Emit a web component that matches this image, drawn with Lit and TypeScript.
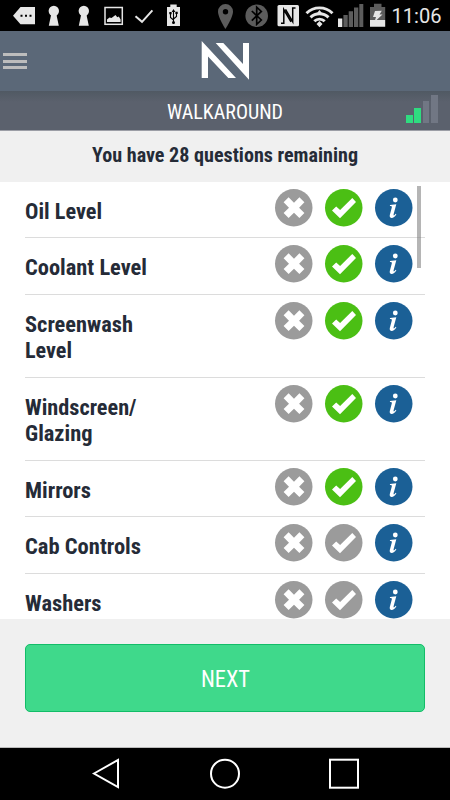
import { LitElement, html, svg, css } from "lit";
import { customElement, property } from "lit/decorators.js";
import { classMap } from "lit/directives/class-map.js";

interface Line {
  text: string;
  width: number;
}
interface Question {
  lines: Line[];
  passed: boolean;
}

const QUESTIONS: Question[] = [
  { lines: [{ text: "Oil Level", width: 77 }], passed: true },
  { lines: [{ text: "Coolant Level", width: 122 }], passed: true },
  { lines: [{ text: "Screenwash", width: 108 }, { text: "Level", width: 47 }], passed: true },
  { lines: [{ text: "Windscreen/", width: 111.5 }, { text: "Glazing", width: 67.5 }], passed: true },
  { lines: [{ text: "Mirrors", width: 66 }], passed: true },
  { lines: [{ text: "Cab Controls", width: 116 }], passed: false },
  { lines: [{ text: "Washers", width: 76.5 }], passed: false },
];

/** One line of condensed text, fitted to a fixed width. */
@customElement("condensed-text")
export class CondensedText extends LitElement {
  @property() text = "";
  @property({ type: Number }) width = 100;
  @property({ type: Number }) height = 26.6;
  @property({ type: Number }) baseline = 19.5;

  static styles = css`
    :host { display: block; }
    svg { display: block; overflow: visible; }
    text { fill: currentColor; font-stretch: 75%; }
  `;

  render() {
    return html`<svg width=${this.width} height=${this.height}>
      <text x="0" y=${this.baseline} textLength=${this.width} lengthAdjust="spacingAndGlyphs">${this.text}</text>
    </svg>`;
  }
}

@customElement("status-bar")
export class StatusBar extends LitElement {
  static styles = css`
    :host { display: block; height: 31px; background: #000; }
    svg { display: block; }
    .lit { fill: #e6e6e6; }
    .dim { fill: #5c5c5c; }
    .stroke { fill: none; stroke: #e6e6e6; }
    .cut { fill: none; stroke: #000; }
    .clock { fill: #e6e6e6; font: 400 20px Roboto, sans-serif; }
  `;

  render() {
    const keyhole = (x: number) => svg`
      <g transform="translate(${x} 0)">
        <circle class="lit" cx="5.5" cy="11" r="5.2"></circle>
        <path class="lit" d="M3.2 13h4.6l2.7 12.7H.5z"></path>
      </g>`;
    return html`<svg width="450" height="31" viewBox="0 0 450 31">
      <path class="lit" d="M13 15.7 20.5 7H35v17.3H20.500z"></path>
      <path d="M20.500 14.700h2v2h-2zM25 14.700h2v2h-2zM29.500 14.700h2v2h-2z"></path>
      ${keyhole(48.3)}${keyhole(78.3)}
      <rect class="stroke" x="105" y="7.500" width="17.300" height="16.800" stroke-width="1.500"></rect>
      <path class="lit" d="M107 22v-2.500l2.500-2 2 .5 4-3 1.800 2.200 1.500-.7 1.800 3V22z"></path>
      <path class="stroke" d="M135.500 16.200 142 21.800l10.400-11.400" stroke-width="2"></path>
      <path class="lit" d="M167 7h3.300V4.500h6.400V7h3.300v19h-13z"></path>
      <path class="cut" d="M173.500 10.500v13M170.500 13v4.500l3 2.500M176.500 12.500v4l-3 2.500" stroke-width="1.100"></path>
      <path d="M173.500 9l1.800 3h-3.600zM169.300 12h2.300v2.300h-2.300zM175.400 11.800h2.300v2.300h-2.300z"></path>
      <circle cx="173.500" cy="22.600" r="1.500"></circle>

      <path class="dim" fill-rule="evenodd" d="M225.500 4a7.500 7.500 0 0 1 7.500 7.500c0 6-7.500 17.500-7.500 17.500S218 17.500 218 11.500A7.500 7.500 0 0 1 225.500 4zm0 5a2.700 2.700 0 1 0 0 5.400 2.700 2.700 0 0 0 0-5.400z"></path>
      <circle class="dim" cx="256.700" cy="15.700" r="11.300"></circle>
      <path class="cut" d="M251.800 11 261.300 20l-4.600 4.300V7.200l4.600 4.200-9.500 9.200" stroke-width="1.700"></path>
      <rect class="lit" x="277.500" y="5" width="21.500" height="21.300" rx="1.500"></rect>
      <path class="cut" d="M281 23.200h2.800V9.500l7.200 12.300M295.500 8h-2.800v13.700L285.500 9.400" stroke-width="1.500"></path>
      <g class="stroke" stroke-width="2.900">
        <path d="M306.500 13.200a18.500 18.500 0 0 1 26 0"></path>
        <path d="M310.500 17.400a12.800 12.800 0 0 1 18 0"></path>
        <path d="M314.300 21.300a7.200 7.200 0 0 1 10.400 0"></path>
      </g>
      <path class="lit" d="M316.500 24 319.500 21l3 3-3 3.200zM316.300 14l3.200-4 3.200 4z"></path>
      <path class="lit" d="M338 18.500h4.300V27H338z"></path>
      <path class="dim" d="M343.400 15h4.300v12h-4.300zM348.700 11.300h4.300V27h-4.300zM354 7.600h4.300V27H354zM359.300 4h4V27h-4z"></path>
      <path class="dim" d="M370 7h4V3.700h7.500V7h3.700v13H370z"></path>
      <path class="lit" d="M370 20h15.200v6.800H370zM375 11l6.800-.3-2.300 3.800h3L374.500 22l1.500-5h-3z"></path>
      <text class="clock" x="391.500" y="23.400" textLength="50" lengthAdjust="spacingAndGlyphs">11:06</text>
    </svg>`;
  }
}

@customElement("question-row")
export class QuestionRow extends LitElement {
  @property({ attribute: false }) question!: Question;

  static styles = css`
    :host { display: block; }
    .row {
      display: flex;
      justify-content: space-between;
      align-items: flex-start;
      box-sizing: border-box;
      padding: 7px 12.700px 11.050px 0;
      border-bottom: 1px solid #dcdcdc;
    }
    .label {
      padding: 10px 0 .9px .2px;
      color: #252b37;
      font: 700 22.500px Roboto, "Liberation Sans", sans-serif;
      font-stretch: 75%;
    }
    .answers { display: flex; gap: 12.500px; }
    svg { display: block; width: 37.500px; height: 37.500px; overflow: visible; }
    .disc { fill: #9b9b9b; }
    .passed .disc { fill: #4bbf14; }
    .info .disc { fill: #1b6096; }
    .mark { fill: #fff; }
  `;

  render() {
    return html`<div class="row">
      <div class="label">
        ${this.question.lines.map(
          (l) => html`<condensed-text .text=${l.text} .width=${l.width}></condensed-text>`
        )}
      </div>
      <div class="answers">
        <svg viewBox="0 0 37.5 37.5">
          <circle class="disc" cx="18.750" cy="18.750" r="18.750"></circle>
          <path class="mark" d="m13.600 8.300 5.400 5.400 5.400-5.400 5 5-5.300 5.400 5.300 5.400-5 5-5.400-5.400-5.400 5.400-5-5 5.400-5.400-5.400-5.400z"></path>
        </svg>
        <svg class=${classMap({ passed: this.question.passed })} viewBox="0 0 37.5 37.5">
          <circle class="disc" cx="18.750" cy="18.750" r="18.750"></circle>
          <path class="mark" d="m7 21.500 4.200-4.100 3.900 3.700L27.300 8.900l3.700 4.200L15 29.200z"></path>
        </svg>
        <svg class="info" viewBox="0 0 37.5 37.5">
          <circle class="disc" cx="18.750" cy="18.750" r="18.750"></circle>
          <circle class="mark" cx="20.300" cy="11" r="2.400"></circle>
          <path class="mark" d="M15 16.100l6.300-.9-2.700 10.100c-.3 1.200.3 1.400 1 .7l1.100-1.300.7.500c-1.500 2.500-3.100 3.800-4.700 3.800-1.600 0-2.300-1.200-1.900-2.900l2-7.700c.2-.8-.1-1.200-.8-1.300l-1.100-.2z"></path>
        </svg>
      </div>
    </div>`;
  }
}

@customElement("app-root")
export class AppRoot extends LitElement {
  static styles = css`
    :host {
      display: flex;
      flex-direction: column;
      width: 450px;
      height: 800px;
      overflow: hidden;
      background: #f0f0f0;
      font-family: Roboto, "Liberation Sans", sans-serif;
      font-stretch: 75%;
    }
    svg { display: block; }
    .header {
      display: grid;
      grid-template-columns: 1fr auto 1fr;
      align-items: center;
      height: 60px;
      background: #5b6878;
    }
    .menu { display: grid; gap: 3.500px; width: 24px; margin-left: 3px; }
    .menu i { height: 3px; background: #bdbdbd; }
    .titlebar {
      display: grid;
      grid-template-columns: 1fr auto 1fr;
      box-sizing: border-box;
      height: 40px;
      background: linear-gradient(#505963, #5b616d 11px);
      border-bottom: 1px solid #9c9ea6;
    }
    .title { grid-column: 2; color: #fff; font-size: 20.200px; }
    .level { display: flex; justify-content: flex-end; align-items: flex-end; gap: 1.500px; height: 31.500px; padding-right: 12.300px; }
    .level i { width: 6.800px; background: #717784; }
    .level .b1 { height: 8px; background: #2fdc80; }
    .level .b2 { height: 15px; background: #2fdc80; }
    .level .b3 { height: 22px; }
    .level .b4 { height: 28px; }
    .remaining {
      display: flex;
      justify-content: center;
      flex: none;
      height: 51px;
      color: #252b37;
      font-size: 19.500px;
      font-weight: 700;
    }
    .list { position: relative; flex: none; height: 436.500px; overflow: hidden; background: #fff; }
    .rows { padding: 0 25px; margin-top: -.5px; }
    .thumb { position: absolute; top: 4px; right: 29px; width: 4px; height: 82px; background: rgba(120, 120, 120, .55); }
    .footer { flex: none; height: 129.500px; box-sizing: border-box; padding: 25px 25px 0; border-bottom: 1px solid #bbb; }
    .next {
      display: flex;
      justify-content: center;
      box-sizing: border-box;
      width: 400px;
      height: 68px;
      padding: 0;
      border: 1px solid #12bd68;
      border-radius: 5px;
      background: #3fd98b;
      color: #fff;
      font: 400 23px Roboto, "Liberation Sans", sans-serif;
      font-stretch: 75%;
    }
    .nav { flex: none; height: 52px; background: #000; }
    .nav svg { fill: none; stroke: #fff; stroke-width: 2; }
  `;

  render() {
    return html`
      <status-bar></status-bar>
      <div class="header">
        <div class="menu"><i></i><i></i><i></i></div>
        <svg width="48" height="40" viewBox="0 0 48 40" fill="#fff">
          <path d="M.7 0 35 37H27.300L7 15.500V37H.7zM14.700 2h7.600L42 23V2H48v36.800z"></path>
        </svg>
      </div>
      <div class="titlebar">
        <condensed-text class="title" .text=${"WALKAROUND"} .width=${116} .height=${39} .baseline=${27.7}></condensed-text>
        <div class="level"><i class="b1"></i><i class="b2"></i><i class="b3"></i><i class="b4"></i></div>
      </div>
      <div class="remaining">
        <condensed-text .text=${"You have 28 questions remaining"} .width=${266} .height=${50} .baseline=${31}></condensed-text>
      </div>
      <div class="list">
        <div class="rows">${QUESTIONS.map((q) => html`<question-row .question=${q}></question-row>`)}</div>
        <div class="thumb"></div>
      </div>
      <div class="footer">
        <button class="next">
          <condensed-text .text=${"NEXT"} .width=${49} .height=${66} .baseline=${42.2}></condensed-text>
        </button>
      </div>
      <div class="nav">
        <svg width="450" height="52" viewBox="0 0 450 52">
          <path d="M94 25.500 118 12v27z"></path>
          <circle cx="225" cy="25.700" r="14"></circle>
          <rect x="330" y="11.700" width="28" height="28"></rect>
        </svg>
      </div>
    `;
  }
}
